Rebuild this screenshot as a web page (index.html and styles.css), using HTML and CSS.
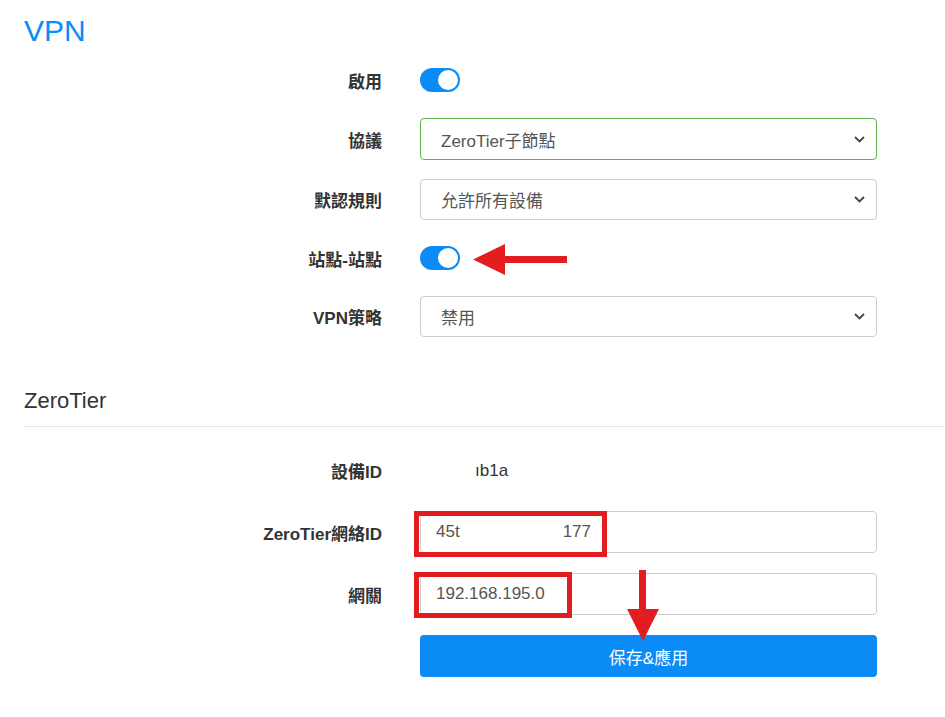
FILE: index.html
```html
<!DOCTYPE html>
<html lang="zh-TW">
<head>
    <meta charset="UTF-8">
    <title>VPN</title>
    <link rel="stylesheet" href="styles.css">
</head>
<body>

    <div class="page">
        <h1 class="page-title">VPN</h1>

        <div class="form">
            <div class="form-row toggle-row">
                <label>啟用</label>
                <div class="switch"><span class="knob"></span></div>
            </div>
            <div class="form-row">
                <label>協議</label>
                <div class="select focused">
                    <span>ZeroTier子節點</span>
                    <svg class="chevron" width="11" height="7" viewBox="0 0 11 7"><path d="M1 1l4.5 4.5L10 1" fill="none" stroke="#444" stroke-width="1.8"/></svg>
                </div>
            </div>
            <div class="form-row">
                <label>默認規則</label>
                <div class="select">
                    <span>允許所有設備</span>
                    <svg class="chevron" width="11" height="7" viewBox="0 0 11 7"><path d="M1 1l4.5 4.5L10 1" fill="none" stroke="#444" stroke-width="1.8"/></svg>
                </div>
            </div>
            <div class="form-row toggle-row">
                <label>站點-站點</label>
                <div class="switch"><span class="knob"></span></div>
            </div>
            <div class="form-row">
                <label>VPN策略</label>
                <div class="select">
                    <span>禁用</span>
                    <svg class="chevron" width="11" height="7" viewBox="0 0 11 7"><path d="M1 1l4.5 4.5L10 1" fill="none" stroke="#444" stroke-width="1.8"/></svg>
                </div>
            </div>
        </div>

        <h2 class="section-title">ZeroTier</h2>

        <div class="form form-zt">
            <div class="form-row">
                <label>設備ID</label>
                <div class="value">ıb1a</div>
            </div>
            <div class="form-row">
                <label>ZeroTier網絡ID</label>
                <div class="text-input"><span class="id-a">45t</span><span class="id-b">177</span></div>
            </div>
            <div class="form-row">
                <label>網關</label>
                <div class="text-input">192.168.195.0</div>
            </div>
            <div class="form-row">
                <span></span>
                <button class="button">保存&amp;應用</button>
            </div>
        </div>

        <!-- annotations drawn over the screenshot -->
        <div class="mark mark-id"></div>
        <div class="mark mark-gw"></div>
        <svg class="arrow arrow-left" width="94" height="31" viewBox="0 0 94 31">
            <rect x="30" y="12" width="64" height="7" fill="#e31c1f"/>
            <polygon points="0,15.5 32,0 32,31" fill="#e31c1f"/>
        </svg>
        <svg class="arrow arrow-down" width="32" height="71" viewBox="0 0 32 71">
            <rect x="12" y="0" width="7" height="42" fill="#e31c1f"/>
            <polygon points="0,39 32,39 16,71" fill="#e31c1f"/>
        </svg>
    </div>

</body>
</html>
```

FILE: styles.css
```css
body {
    margin: 0;
    font-family: "Liberation Sans", "Noto Sans CJK TC", sans-serif;
    color: #333;
    background: #fff;
}

.page {
    position: relative;
    padding: 13px 0 0 24px;
}

.page-title {
    margin: 0;
    font-size: 30px;
    line-height: 36px;
    font-weight: normal;
    color: #0b8bf5;
}

.form {
    display: flex;
    flex-direction: column;
    gap: 19px;
    margin-top: 12px;
}

.form-row {
    display: grid;
    grid-template-columns: 358px 457px;
    column-gap: 38px;
    align-items: center;
    min-height: 41px;
}

.toggle-row {
    min-height: 38px;
}

.form-row label {
    text-align: right;
    font-size: 17px;
    font-weight: bold;
    color: #333;
}

.switch {
    width: 40px;
    height: 24px;
    border-radius: 12px;
    background: #0b8bf5;
    display: flex;
    justify-content: flex-end;
    align-items: center;
    padding: 0 2px;
    box-sizing: border-box;
}

.knob {
    width: 20px;
    height: 20px;
    border-radius: 50%;
    background: #fff;
}

.select,
.text-input {
    height: 41px;
    box-sizing: border-box;
    border: 1px solid #ccc;
    border-radius: 4px;
    display: flex;
    align-items: center;
    font-size: 17px;
    color: #555;
}

.select {
    justify-content: space-between;
    padding: 0 11px 0 20px;
}

.select.focused {
    border-color: #5db347;
    height: 42px;
}

.text-input {
    height: 42px;
    padding-left: 15px;
}

.id-b {
    margin-left: 103px;
}

.section-title {
    margin: 51px 0 0;
    padding-bottom: 12px;
    border-bottom: 1px solid #e5e5e5;
    font-size: 22px;
    line-height: 26px;
    font-weight: normal;
    color: #333;
}

.form-zt {
    gap: 20px;
    margin-top: 23px;
}

.value {
    font-size: 17px;
    color: #333;
    padding-left: 55px;
}

.button {
    height: 42px;
    border: none;
    border-radius: 4px;
    background: #0b8bf5;
    color: #fff;
    font-family: inherit;
    font-size: 17px;
    cursor: pointer;
}

.mark {
    position: absolute;
    border: 5px solid #e31c1f;
    box-sizing: border-box;
}

.mark-id {
    left: 414px;
    top: 511px;
    width: 193px;
    height: 46px;
}

.mark-gw {
    left: 414px;
    top: 572px;
    width: 158px;
    height: 46px;
}

.arrow {
    position: absolute;
}

.arrow-left {
    left: 473px;
    top: 244px;
}

.arrow-down {
    left: 627px;
    top: 570px;
}
```
